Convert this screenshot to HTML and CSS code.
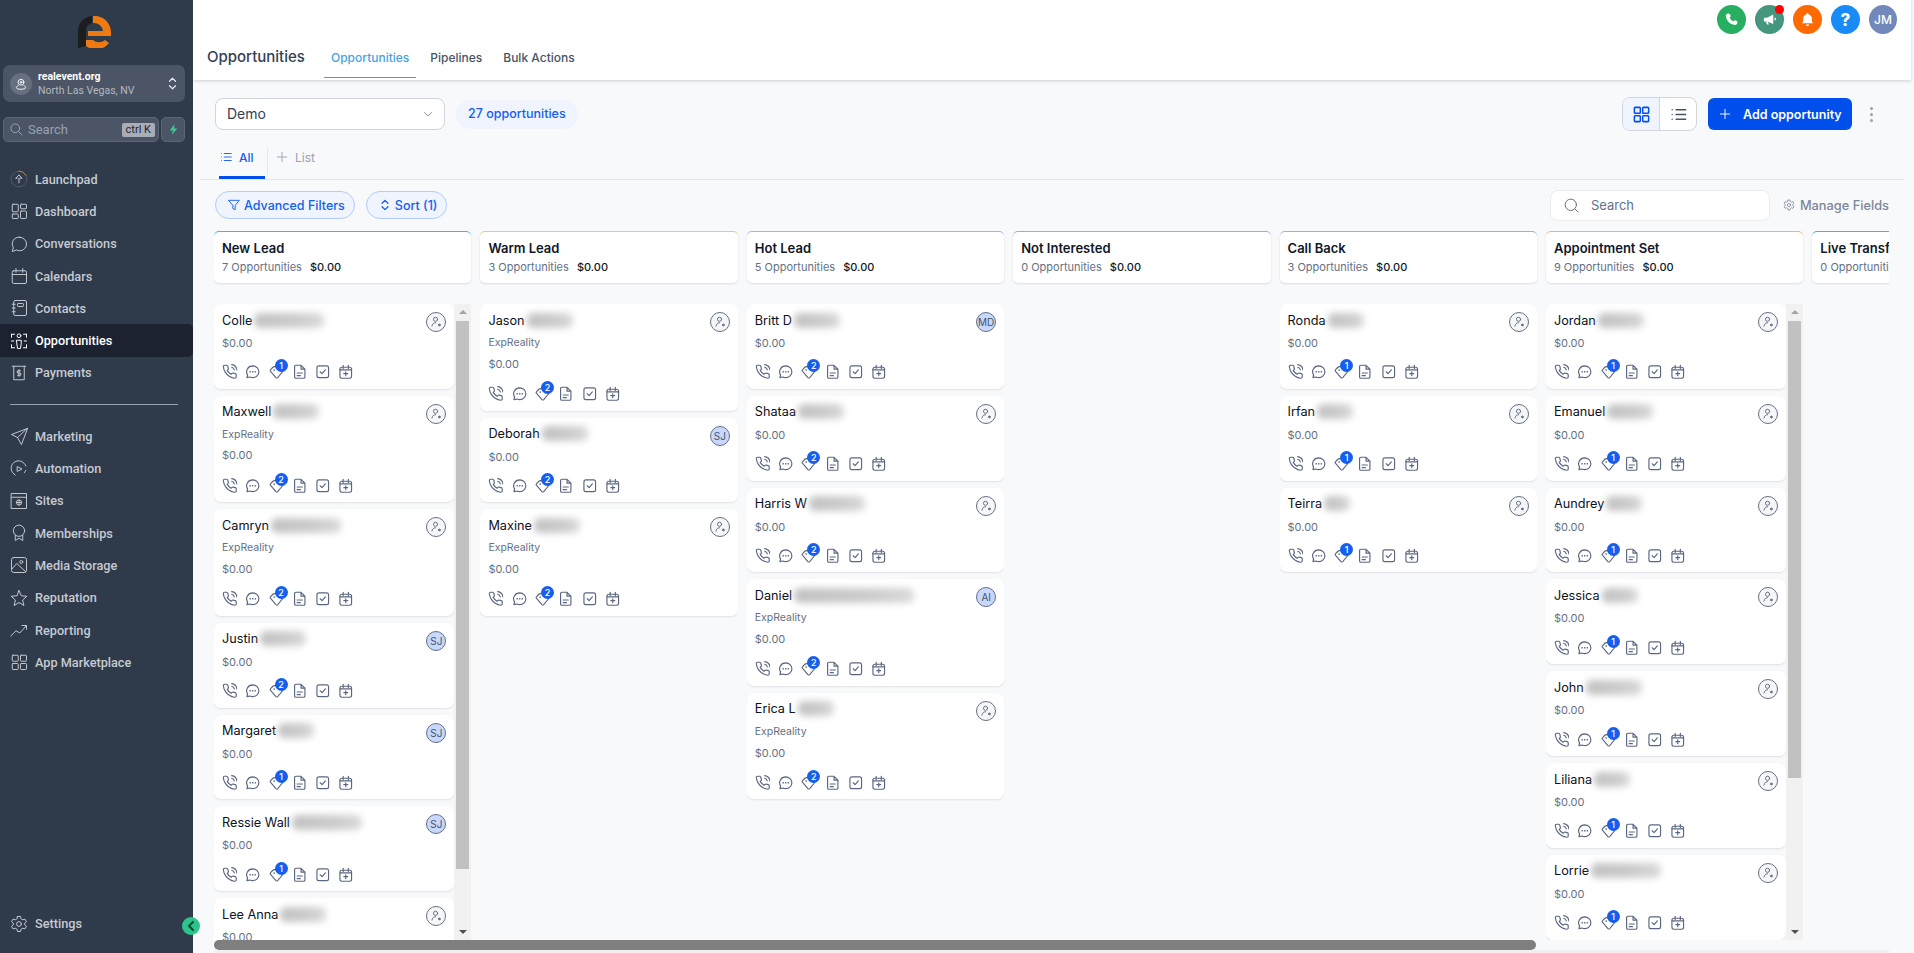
FILE: index.html
```html
<!DOCTYPE html>
<html lang="en">
  <head>
    <meta charset="UTF-8" />
    <title>Opportunities</title>
    <link rel="stylesheet" href="styles.css">
  </head>
  <body>
    <!-- shared icons -->
    <svg class="sprite" xmlns="http://www.w3.org/2000/svg">
      <symbol id="i-phone" viewBox="0 0 24 24"><path d="M15 5a5 5 0 0 1 4 4M15 1a9 9 0 0 1 8 8m-1 8v3a2 2 0 0 1-2.2 2 19.8 19.8 0 0 1-8.6-3.1 19.5 19.5 0 0 1-6-6A19.8 19.8 0 0 1 2.1 4.2 2 2 0 0 1 4.1 2h3a2 2 0 0 1 2 1.7c.1 1 .4 1.9.7 2.8a2 2 0 0 1-.5 2.1L8.1 9.9a16 16 0 0 0 6 6l1.3-1.3a2 2 0 0 1 2.1-.4c.9.3 1.8.6 2.8.7A2 2 0 0 1 22 17z"/></symbol>
      <symbol id="i-chat" viewBox="0 0 24 24"><path d="M12 3a9.500 9 0 0 1 0 18c-1.500 0-2.800-.3-4-.9L3 21l1-4.200A9.500 9 0 0 1 12 3z"/><path d="M8 12h.01M12 12h.01M16 12h.01" stroke-width="2.600"/></symbol>
      <symbol id="i-tag" viewBox="0 0 24 24"><path d="M2.500 11.500a2 2 0 0 1 0-2.800L6 5a4 4 0 0 1 3-1h10a2 2 0 0 1 2 2v6l-7.500 9a2 2 0 0 1-2.800 0z"/><path d="M8 9.500h.01" stroke-width="2.400"/></symbol>
      <symbol id="i-doc" viewBox="0 0 24 24"><path d="M14 2H6a2 2 0 0 0-2 2v16a2 2 0 0 0 2 2h12a2 2 0 0 0 2-2V8zM14 2v6h6M8 14h8M8 18h5"/></symbol>
      <symbol id="i-check" viewBox="0 0 24 24"><rect x="3" y="3" width="18" height="18" rx="3"/><path d="M8 12l3 3 5-6"/></symbol>
      <symbol id="i-cal" viewBox="0 0 24 24"><rect x="3" y="5" width="18" height="17" rx="3"/><path d="M8 2v5M16 2v5M3 9h18M12 12v6M9 15h6"/></symbol>
      <symbol id="i-assign" viewBox="0 0 20 20"><circle cx="9.500" cy="7" r="2.300"/><path d="M5.500 14.500c.3-2.400 2-3.700 4-3.700"/><circle cx="13.700" cy="13.300" r="1" fill="currentColor"/></symbol>
      <symbol id="i-list" viewBox="0 0 24 24"><path d="M9 6h12M9 12h12M9 18h12M4 6h.01M4 12h.01M4 18h.01"/></symbol>
      <symbol id="i-grid" viewBox="0 0 24 24"><rect x="3" y="3" width="7.500" height="7.500" rx="1"/><rect x="13.500" y="3" width="7.500" height="7.500" rx="1"/><rect x="3" y="13.500" width="7.500" height="7.500" rx="1"/><rect x="13.500" y="13.500" width="7.500" height="7.500" rx="1"/></symbol>
    </svg>

    <aside class="sidebar">
      <svg class="logo" viewBox="0 0 33 32">
        <path fill="#1d1d1f" d="M0 32V15A15 15 0 0 1 14 0v7a8 8 0 0 0-6 8v15z"/>
        <path fill="#ee7a12" d="M15 0a16.500 16.500 0 0 1 18 16v4H10v-5h15a9 9 0 0 0-10-8zM8 24h7a9 9 0 0 0 12 0l4 3a16 16 0 0 1-23 3z"/>
      </svg>

      <div class="location">
        <span class="location-icon">
          <svg viewBox="0 0 24 24"><circle cx="12" cy="9" r="5"/><circle cx="12" cy="9" r="1.500"/><path d="M7 15c-2 1-3 2-3 3 0 2 4 3 8 3s8-1 8-3c0-1-1-2-3-3"/></svg>
        </span>
        <div class="location-text">
          <div class="location-name">realevent.org</div>
          <div class="location-city">North Las Vegas, NV</div>
        </div>
        <svg class="location-arrows" viewBox="0 0 12 20"><path d="M2 7l4-4 4 4M2 13l4 4 4-4"/></svg>
      </div>

      <div class="search-row">
        <div class="side-search">
          <svg viewBox="0 0 24 24"><circle cx="10" cy="10" r="7"/><path d="M15.500 15.500L21 21"/></svg>
          <span class="side-search-text">Search</span>
          <span class="kbd">ctrl K</span>
        </div>
        <div class="bolt-box">
          <svg viewBox="0 0 24 24"><path d="M14 2L5 14h6l-2 8 10-12h-6z"/></svg>
        </div>
      </div>

      <nav class="nav nav-first">
        <a class="nav-item"><svg viewBox="0 0 24 24"><circle class="ring" cx="12" cy="12" r="10.500"/><path class="ring-on" d="M12 1.500A10.500 10.500 0 0 1 21 7"/><path d="M12 17v-6M8 11l4-4.500 4 4.500h-2.500M9.500 11H8"/></svg>Launchpad</a>
        <a class="nav-item"><svg viewBox="0 0 24 24"><rect x="3" y="3" width="8" height="10" rx="1"/><rect x="14" y="3" width="8" height="6" rx="1"/><rect x="3" y="16" width="8" height="6" rx="1"/><rect x="14" y="12" width="8" height="10" rx="1"/></svg>Dashboard</a>
        <a class="nav-item"><svg viewBox="0 0 24 24"><path d="M13 3a9 9 0 0 1 0 18c-1.500 0-3-.4-4.200-1L3 22l1.500-5A9 9 0 0 1 13 3z"/></svg>Conversations</a>
        <a class="nav-item"><svg viewBox="0 0 24 24"><rect x="3" y="5" width="19" height="17" rx="2"/><path d="M8 2v5M17 2v5M3 10h19"/></svg>Calendars</a>
        <a class="nav-item"><svg viewBox="0 0 24 24"><rect x="5" y="2" width="17" height="20" rx="2"/><path d="M3 7h4M3 12h4M3 17h4"/><rect x="10" y="6" width="8" height="4" rx="1"/></svg>Contacts</a>
        <a class="nav-item active"><svg viewBox="0 0 24 24" stroke-width="2"><circle cx="12" cy="5" r="2.500"/><path d="M9 11h6v4l-1 7h-4l-1-7zM2 3h4M2 3v4M22 3h-4M22 3v4M2 21v-4M2 21h4M22 21v-4M22 21h-4M2 12h3M19 12h3"/></svg>Opportunities</a>
        <a class="nav-item"><svg viewBox="0 0 24 24"><path d="M3 3h18M5 3v18h14V3"/><path d="M14 9h-3a1.500 1.500 0 0 0 0 3h2a1.500 1.500 0 0 1 0 3h-3M12 7.500v9" stroke-width="1.400"/></svg>Payments</a>
      </nav>

      <div class="nav-divider"></div>

      <nav class="nav">
        <a class="nav-item"><svg viewBox="0 0 24 24"><path d="M23 2L2 10l8 4 5 9zM10 14L23 2"/></svg>Marketing</a>
        <a class="nav-item"><svg viewBox="0 0 24 24"><path d="M7 20A10 10 0 1 1 21 8"/><path d="M10 9l6 3-6 3z"/><path d="M21 14a10 10 0 0 1-2 3"/></svg>Automation</a>
        <a class="nav-item"><svg viewBox="0 0 24 24"><rect x="2" y="2" width="20" height="20"/><path d="M2 7h20"/><circle cx="12" cy="14" r="3.500"/><path d="M8.500 14h7M12 10.500v7"/></svg>Sites</a>
        <a class="nav-item"><svg viewBox="0 0 24 24"><circle cx="12" cy="9" r="7.500"/><path d="M7 15v7l5-3 5 3v-7"/></svg>Memberships</a>
        <a class="nav-item"><svg viewBox="0 0 24 24"><rect x="2" y="2" width="20" height="20" rx="3"/><circle cx="15" cy="8" r="2"/><path d="M2 18l7-8 12 11"/></svg>Media Storage</a>
        <a class="nav-item"><svg viewBox="0 0 24 24"><path d="M12 2l3 7 7.500.7-5.700 5 1.700 7.300-6.500-4-6.500 4 1.700-7.300-5.700-5L9 9z"/></svg>Reputation</a>
        <a class="nav-item"><svg viewBox="0 0 24 24"><path d="M1 20l7-7 5 3 9-10M16 6h6v5"/></svg>Reporting</a>
        <a class="nav-item"><svg viewBox="0 0 24 24"><rect x="3" y="3" width="8" height="8" rx="1"/><rect x="14" y="3" width="8" height="8" rx="1"/><rect x="3" y="14" width="8" height="8" rx="1"/><rect x="14" y="14" width="8" height="8" rx="1"/></svg>App Marketplace</a>
      </nav>

      <a class="nav-item settings"><svg viewBox="0 0 24 24"><circle cx="12" cy="12" r="3.200"/><path d="M10 2h4l.6 3 2.400 1.400 2.900-1 2 3.400-2.300 2v2.400l2.300 2-2 3.400-2.900-1L14.600 19l-.6 3h-4l-.6-3L7 17.600l-2.900 1-2-3.400 2.300-2v-2.400l-2.300-2 2-3.400 2.900 1L9.400 5z"/></svg>Settings</a>

      <span class="collapse-btn">
        <svg viewBox="0 0 12 12"><path d="M8 2L4 6l4 4"/></svg>
      </span>
    </aside>

    <main class="main">
      <header class="topbar">
        <div class="topbar-actions">
          <span class="round round-phone"><svg viewBox="0 0 24 24"><path d="M6.600 2.500l3 .5 1.300 4.200-2 1.800a13 13 0 0 0 6 6l1.800-2 4.200 1.300.5 3c0 2-2 3.700-4 3.500C9.500 20 3.800 14 2.900 6.500 2.800 4.500 4.500 2.500 6.600 2.500z"/></svg></span>
          <span class="round round-news">
            <svg viewBox="0 0 24 24"><path d="M3 9h5l10-5v15L8 15H3z"/><path d="M6 15l2 5h3l-2-5z"/><path d="M20 9h2v4h-2z"/></svg>
            <i class="dot-red"></i>
          </span>
          <span class="round round-bell"><svg viewBox="0 0 24 24"><path d="M12 2a2 2 0 0 1 2 2 7 7 0 0 1 5 7v4l2 3H3l2-3v-4a7 7 0 0 1 5-7 2 2 0 0 1 2-2zM9.500 20h5a2.500 2.500 0 0 1-5 0z"/></svg></span>
          <span class="round round-help">?</span>
          <span class="round round-user">JM</span>
        </div>
        <div class="topbar-nav">
          <h1 class="page-title">Opportunities</h1>
          <a class="top-tab active">Opportunities</a>
          <a class="top-tab">Pipelines</a>
          <a class="top-tab">Bulk Actions</a>
        </div>
      </header>

      <section class="content">
        <div class="toolbar">
          <div class="select">Demo
            <svg viewBox="0 0 24 24"><path d="M5 9l7 7 7-7"/></svg>
          </div>
          <span class="count-chip">27 opportunities</span>
          <div class="toolbar-right">
            <div class="view-toggle">
              <span class="view-btn on"><svg><use href="#i-grid"/></svg></span>
              <span class="view-btn"><svg><use href="#i-list"/></svg></span>
            </div>
            <button class="add-btn"><svg viewBox="0 0 24 24"><path d="M12 4v16M4 12h16"/></svg>Add opportunity</button>
            <span class="kebab"><i></i><i></i><i></i></span>
          </div>
        </div>

        <div class="list-tabs">
          <a class="list-tab on"><svg><use href="#i-list"/></svg>All</a>
          <span class="list-sep"></span>
          <a class="list-tab"><svg viewBox="0 0 24 24"><path d="M12 4v16M4 12h16"/></svg>List</a>
        </div>

        <div class="filters">
          <button class="pill"><svg viewBox="0 0 24 24"><path d="M3 4h18l-7 9v7l-4-2v-5z"/></svg>Advanced Filters</button>
          <button class="pill pill-sort"><svg viewBox="0 0 24 24"><path d="M7 9l5-5 5 5M7 15l5 5 5-5"/></svg>Sort (1)</button>
          <div class="filters-right">
            <div class="board-search">
              <svg viewBox="0 0 24 24"><circle cx="11" cy="11" r="8"/><path d="M17 17l4 4"/></svg>
              Search
            </div>
            <a class="manage"><svg viewBox="0 0 24 24"><circle cx="12" cy="12" r="3.200"/><path d="M10 2h4l.6 3 2.400 1.400 2.900-1 2 3.400-2.300 2v2.400l2.300 2-2 3.400-2.900-1L14.600 19l-.6 3h-4l-.6-3L7 17.600l-2.900 1-2-3.400 2.300-2v-2.400l-2.300-2 2-3.400 2.900 1L9.400 5z"/></svg>Manage Fields</a>
          </div>
        </div>

        <div class="board">
          <div class="columns">

            <div class="column">
              <div class="stage stage-sky"><div class="stage-name">New Lead</div><div class="stage-meta">7 Opportunities <b>$0.00</b></div></div>
              <div class="stage-body">
                <div class="cards">
                  <div class="card"><div class="card-head"><span class="name">Colle</span><span class="blur blur-xl"></span><span class="assign"><svg><use href="#i-assign"/></svg></span></div><div class="price">$0.00</div><div class="acts"><svg><use href="#i-phone"/></svg><svg><use href="#i-chat"/></svg><span class="tag"><svg><use href="#i-tag"/></svg><em>1</em></span><svg><use href="#i-doc"/></svg><svg><use href="#i-check"/></svg><svg><use href="#i-cal"/></svg></div></div>
                  <div class="card"><div class="card-head"><span class="name">Maxwell</span><span class="blur blur-m"></span><span class="assign"><svg><use href="#i-assign"/></svg></span></div><div class="company">ExpReality</div><div class="price">$0.00</div><div class="acts"><svg><use href="#i-phone"/></svg><svg><use href="#i-chat"/></svg><span class="tag"><svg><use href="#i-tag"/></svg><em>2</em></span><svg><use href="#i-doc"/></svg><svg><use href="#i-check"/></svg><svg><use href="#i-cal"/></svg></div></div>
                  <div class="card"><div class="card-head"><span class="name">Camryn</span><span class="blur blur-xl"></span><span class="assign"><svg><use href="#i-assign"/></svg></span></div><div class="company">ExpReality</div><div class="price">$0.00</div><div class="acts"><svg><use href="#i-phone"/></svg><svg><use href="#i-chat"/></svg><span class="tag"><svg><use href="#i-tag"/></svg><em>2</em></span><svg><use href="#i-doc"/></svg><svg><use href="#i-check"/></svg><svg><use href="#i-cal"/></svg></div></div>
                  <div class="card"><div class="card-head"><span class="name">Justin</span><span class="blur blur-m"></span><span class="assign initials">SJ</span></div><div class="price">$0.00</div><div class="acts"><svg><use href="#i-phone"/></svg><svg><use href="#i-chat"/></svg><span class="tag"><svg><use href="#i-tag"/></svg><em>2</em></span><svg><use href="#i-doc"/></svg><svg><use href="#i-check"/></svg><svg><use href="#i-cal"/></svg></div></div>
                  <div class="card"><div class="card-head"><span class="name">Margaret</span><span class="blur blur-s"></span><span class="assign initials">SJ</span></div><div class="price">$0.00</div><div class="acts"><svg><use href="#i-phone"/></svg><svg><use href="#i-chat"/></svg><span class="tag"><svg><use href="#i-tag"/></svg><em>1</em></span><svg><use href="#i-doc"/></svg><svg><use href="#i-check"/></svg><svg><use href="#i-cal"/></svg></div></div>
                  <div class="card"><div class="card-head"><span class="name">Ressie Wall</span><span class="blur blur-xl"></span><span class="assign initials">SJ</span></div><div class="price">$0.00</div><div class="acts"><svg><use href="#i-phone"/></svg><svg><use href="#i-chat"/></svg><span class="tag"><svg><use href="#i-tag"/></svg><em>1</em></span><svg><use href="#i-doc"/></svg><svg><use href="#i-check"/></svg><svg><use href="#i-cal"/></svg></div></div>
                  <div class="card"><div class="card-head"><span class="name">Lee Anna</span><span class="blur blur-m"></span><span class="assign"><svg><use href="#i-assign"/></svg></span></div><div class="price">$0.00</div></div>
                </div>
                <div class="vbar"><i class="up"></i><b class="thumb thumb-long"></b><i class="down"></i></div>
              </div>
            </div>

            <div class="column">
              <div class="stage stage-amber"><div class="stage-name">Warm Lead</div><div class="stage-meta">3 Opportunities <b>$0.00</b></div></div>
              <div class="stage-body">
                <div class="cards">
                  <div class="card"><div class="card-head"><span class="name">Jason</span><span class="blur blur-m"></span><span class="assign"><svg><use href="#i-assign"/></svg></span></div><div class="company">ExpReality</div><div class="price">$0.00</div><div class="acts"><svg><use href="#i-phone"/></svg><svg><use href="#i-chat"/></svg><span class="tag"><svg><use href="#i-tag"/></svg><em>2</em></span><svg><use href="#i-doc"/></svg><svg><use href="#i-check"/></svg><svg><use href="#i-cal"/></svg></div></div>
                  <div class="card"><div class="card-head"><span class="name">Deborah</span><span class="blur blur-m"></span><span class="assign initials">SJ</span></div><div class="price">$0.00</div><div class="acts"><svg><use href="#i-phone"/></svg><svg><use href="#i-chat"/></svg><span class="tag"><svg><use href="#i-tag"/></svg><em>2</em></span><svg><use href="#i-doc"/></svg><svg><use href="#i-check"/></svg><svg><use href="#i-cal"/></svg></div></div>
                  <div class="card"><div class="card-head"><span class="name">Maxine</span><span class="blur blur-m"></span><span class="assign"><svg><use href="#i-assign"/></svg></span></div><div class="company">ExpReality</div><div class="price">$0.00</div><div class="acts"><svg><use href="#i-phone"/></svg><svg><use href="#i-chat"/></svg><span class="tag"><svg><use href="#i-tag"/></svg><em>2</em></span><svg><use href="#i-doc"/></svg><svg><use href="#i-check"/></svg><svg><use href="#i-cal"/></svg></div></div>
                </div>
              </div>
            </div>

            <div class="column">
              <div class="stage stage-violet"><div class="stage-name">Hot Lead</div><div class="stage-meta">5 Opportunities <b>$0.00</b></div></div>
              <div class="stage-body">
                <div class="cards">
                  <div class="card"><div class="card-head"><span class="name">Britt D</span><span class="blur blur-m"></span><span class="assign initials">MD</span></div><div class="price">$0.00</div><div class="acts"><svg><use href="#i-phone"/></svg><svg><use href="#i-chat"/></svg><span class="tag"><svg><use href="#i-tag"/></svg><em>2</em></span><svg><use href="#i-doc"/></svg><svg><use href="#i-check"/></svg><svg><use href="#i-cal"/></svg></div></div>
                  <div class="card"><div class="card-head"><span class="name">Shataa</span><span class="blur blur-m"></span><span class="assign"><svg><use href="#i-assign"/></svg></span></div><div class="price">$0.00</div><div class="acts"><svg><use href="#i-phone"/></svg><svg><use href="#i-chat"/></svg><span class="tag"><svg><use href="#i-tag"/></svg><em>2</em></span><svg><use href="#i-doc"/></svg><svg><use href="#i-check"/></svg><svg><use href="#i-cal"/></svg></div></div>
                  <div class="card"><div class="card-head"><span class="name">Harris W</span><span class="blur blur-l"></span><span class="assign"><svg><use href="#i-assign"/></svg></span></div><div class="price">$0.00</div><div class="acts"><svg><use href="#i-phone"/></svg><svg><use href="#i-chat"/></svg><span class="tag"><svg><use href="#i-tag"/></svg><em>2</em></span><svg><use href="#i-doc"/></svg><svg><use href="#i-check"/></svg><svg><use href="#i-cal"/></svg></div></div>
                  <div class="card"><div class="card-head"><span class="name">Daniel</span><span class="blur blur-xxl"></span><span class="assign initials">AI</span></div><div class="company">ExpReality</div><div class="price">$0.00</div><div class="acts"><svg><use href="#i-phone"/></svg><svg><use href="#i-chat"/></svg><span class="tag"><svg><use href="#i-tag"/></svg><em>2</em></span><svg><use href="#i-doc"/></svg><svg><use href="#i-check"/></svg><svg><use href="#i-cal"/></svg></div></div>
                  <div class="card"><div class="card-head"><span class="name">Erica L</span><span class="blur blur-s"></span><span class="assign"><svg><use href="#i-assign"/></svg></span></div><div class="company">ExpReality</div><div class="price">$0.00</div><div class="acts"><svg><use href="#i-phone"/></svg><svg><use href="#i-chat"/></svg><span class="tag"><svg><use href="#i-tag"/></svg><em>2</em></span><svg><use href="#i-doc"/></svg><svg><use href="#i-check"/></svg><svg><use href="#i-cal"/></svg></div></div>
                </div>
              </div>
            </div>

            <div class="column">
              <div class="stage stage-blue"><div class="stage-name">Not Interested</div><div class="stage-meta">0 Opportunities <b>$0.00</b></div></div>
              <div class="stage-body"></div>
            </div>

            <div class="column">
              <div class="stage stage-blue"><div class="stage-name">Call Back</div><div class="stage-meta">3 Opportunities <b>$0.00</b></div></div>
              <div class="stage-body">
                <div class="cards">
                  <div class="card"><div class="card-head"><span class="name">Ronda</span><span class="blur blur-s"></span><span class="assign"><svg><use href="#i-assign"/></svg></span></div><div class="price">$0.00</div><div class="acts"><svg><use href="#i-phone"/></svg><svg><use href="#i-chat"/></svg><span class="tag"><svg><use href="#i-tag"/></svg><em>1</em></span><svg><use href="#i-doc"/></svg><svg><use href="#i-check"/></svg><svg><use href="#i-cal"/></svg></div></div>
                  <div class="card"><div class="card-head"><span class="name">Irfan</span><span class="blur blur-s"></span><span class="assign"><svg><use href="#i-assign"/></svg></span></div><div class="price">$0.00</div><div class="acts"><svg><use href="#i-phone"/></svg><svg><use href="#i-chat"/></svg><span class="tag"><svg><use href="#i-tag"/></svg><em>1</em></span><svg><use href="#i-doc"/></svg><svg><use href="#i-check"/></svg><svg><use href="#i-cal"/></svg></div></div>
                  <div class="card"><div class="card-head"><span class="name">Teirra</span><span class="blur blur-xs"></span><span class="assign"><svg><use href="#i-assign"/></svg></span></div><div class="price">$0.00</div><div class="acts"><svg><use href="#i-phone"/></svg><svg><use href="#i-chat"/></svg><span class="tag"><svg><use href="#i-tag"/></svg><em>1</em></span><svg><use href="#i-doc"/></svg><svg><use href="#i-check"/></svg><svg><use href="#i-cal"/></svg></div></div>
                </div>
              </div>
            </div>

            <div class="column">
              <div class="stage stage-orange"><div class="stage-name">Appointment Set</div><div class="stage-meta">9 Opportunities <b>$0.00</b></div></div>
              <div class="stage-body">
                <div class="cards">
                  <div class="card"><div class="card-head"><span class="name">Jordan</span><span class="blur blur-m"></span><span class="assign"><svg><use href="#i-assign"/></svg></span></div><div class="price">$0.00</div><div class="acts"><svg><use href="#i-phone"/></svg><svg><use href="#i-chat"/></svg><span class="tag"><svg><use href="#i-tag"/></svg><em>1</em></span><svg><use href="#i-doc"/></svg><svg><use href="#i-check"/></svg><svg><use href="#i-cal"/></svg></div></div>
                  <div class="card"><div class="card-head"><span class="name">Emanuel</span><span class="blur blur-m"></span><span class="assign"><svg><use href="#i-assign"/></svg></span></div><div class="price">$0.00</div><div class="acts"><svg><use href="#i-phone"/></svg><svg><use href="#i-chat"/></svg><span class="tag"><svg><use href="#i-tag"/></svg><em>1</em></span><svg><use href="#i-doc"/></svg><svg><use href="#i-check"/></svg><svg><use href="#i-cal"/></svg></div></div>
                  <div class="card"><div class="card-head"><span class="name">Aundrey</span><span class="blur blur-s"></span><span class="assign"><svg><use href="#i-assign"/></svg></span></div><div class="price">$0.00</div><div class="acts"><svg><use href="#i-phone"/></svg><svg><use href="#i-chat"/></svg><span class="tag"><svg><use href="#i-tag"/></svg><em>1</em></span><svg><use href="#i-doc"/></svg><svg><use href="#i-check"/></svg><svg><use href="#i-cal"/></svg></div></div>
                  <div class="card"><div class="card-head"><span class="name">Jessica</span><span class="blur blur-s"></span><span class="assign"><svg><use href="#i-assign"/></svg></span></div><div class="price">$0.00</div><div class="acts"><svg><use href="#i-phone"/></svg><svg><use href="#i-chat"/></svg><span class="tag"><svg><use href="#i-tag"/></svg><em>1</em></span><svg><use href="#i-doc"/></svg><svg><use href="#i-check"/></svg><svg><use href="#i-cal"/></svg></div></div>
                  <div class="card"><div class="card-head"><span class="name">John</span><span class="blur blur-l"></span><span class="assign"><svg><use href="#i-assign"/></svg></span></div><div class="price">$0.00</div><div class="acts"><svg><use href="#i-phone"/></svg><svg><use href="#i-chat"/></svg><span class="tag"><svg><use href="#i-tag"/></svg><em>1</em></span><svg><use href="#i-doc"/></svg><svg><use href="#i-check"/></svg><svg><use href="#i-cal"/></svg></div></div>
                  <div class="card"><div class="card-head"><span class="name">Liliana</span><span class="blur blur-s"></span><span class="assign"><svg><use href="#i-assign"/></svg></span></div><div class="price">$0.00</div><div class="acts"><svg><use href="#i-phone"/></svg><svg><use href="#i-chat"/></svg><span class="tag"><svg><use href="#i-tag"/></svg><em>1</em></span><svg><use href="#i-doc"/></svg><svg><use href="#i-check"/></svg><svg><use href="#i-cal"/></svg></div></div>
                  <div class="card"><div class="card-head"><span class="name">Lorrie</span><span class="blur blur-xl"></span><span class="assign"><svg><use href="#i-assign"/></svg></span></div><div class="price">$0.00</div><div class="acts"><svg><use href="#i-phone"/></svg><svg><use href="#i-chat"/></svg><span class="tag"><svg><use href="#i-tag"/></svg><em>1</em></span><svg><use href="#i-doc"/></svg><svg><use href="#i-check"/></svg><svg><use href="#i-cal"/></svg></div></div>
                </div>
                <div class="vbar"><i class="up"></i><b class="thumb thumb-short"></b><i class="down"></i></div>
              </div>
            </div>

            <div class="column">
              <div class="stage stage-sky"><div class="stage-name">Live Transfer</div><div class="stage-meta">0 Opportunities <b>$0.00</b></div></div>
              <div class="stage-body"></div>
            </div>

          </div>
          <div class="hbar"><b class="hthumb"></b></div>
        </div>
      </section>
    </main>
  </body>
</html>
```

FILE: styles.css
```css
* {
  box-sizing: border-box;
}
html,
body {
  margin: 0;
  height: 100%;
  overflow: hidden;
}
body {
  display: flex;
  background-color: #f8f9fb;
  font-family: Inter, "Liberation Sans", sans-serif;
  color: #101828;
}
svg {
  display: block;
  fill: none;
  stroke: currentColor;
  stroke-width: 1.6;
  stroke-linecap: round;
  stroke-linejoin: round;
}
.sprite {
  display: none;
}
h1 {
  margin: 0;
}
button {
  font-family: inherit;
  cursor: pointer;
}

/* sidebar */
.sidebar {
  position: relative;
  flex: none;
  width: 193px;
  display: flex;
  flex-direction: column;
  padding-top: 16px;
  background-color: #2f3a4b;
  font-family: Roboto, "Liberation Sans", sans-serif;
}
.logo {
  width: 33px;
  height: 32px;
  margin-left: 78px;
  stroke: none;
}
.location {
  display: flex;
  align-items: center;
  height: 37px;
  margin: 17px 8px 0 3px;
  padding: 0 8px 0 7px;
  border-radius: 7px;
  background-color: #4b5565;
}
.location-icon {
  flex: none;
  width: 22px;
  height: 22px;
  display: flex;
  align-items: center;
  justify-content: center;
  margin-right: 6px;
  border-radius: 50%;
  background-color: #667080;
  color: #fff;
}
.location-icon svg {
  width: 14px;
  height: 14px;
}
.location-text {
  flex: 1;
  font-size: 10.500px;
  line-height: 14px;
}
.location-name {
  color: #fff;
  font-weight: 700;
}
.location-city {
  color: #b4b9c2;
  white-space: nowrap;
}
.location-arrows {
  flex: none;
  width: 9px;
  height: 15px;
  color: #e4e7ec;
}
.search-row {
  display: flex;
  gap: 2px;
  height: 25px;
  margin: 15px 8px 0 3px;
}
.side-search {
  flex: 1;
  display: flex;
  align-items: center;
  padding: 0 3px 0 5px;
  border: 1px solid #5c6675;
  border-radius: 5px;
  background-color: #4b5565;
  color: #98a2b3;
}
.side-search svg {
  width: 15px;
  height: 15px;
  margin-right: 4px;
}
.side-search-text {
  flex: 1;
  font-size: 13px;
}
.kbd {
  height: 14px;
  padding: 0 4px;
  border-radius: 2px;
  background-color: #a9adb5;
  color: #1d2939;
  font-size: 11px;
  line-height: 14px;
}
.bolt-box {
  flex: none;
  width: 24px;
  display: flex;
  align-items: center;
  justify-content: center;
  border: 1px solid #5c6675;
  border-radius: 5px;
  background-color: #4b5565;
}
.bolt-box svg {
  width: 13px;
  height: 13px;
  fill: #37ca93;
  stroke: none;
}
.nav-first {
  margin-top: 21px;
}
.nav-item {
  display: flex;
  align-items: center;
  gap: 7px;
  height: 32.300px;
  padding-left: 10px;
  color: #c6cad1;
  font-size: 12.700px;
  font-weight: 500;
  white-space: nowrap;
}
.nav-item svg {
  flex: none;
  width: 18px;
  height: 18px;
  stroke-width: 1.300;
}
.nav-item.active {
  border-radius: 0 5px 5px 0;
  background-color: #1c2230;
  color: #fff;
}
.ring {
  stroke: #4f5a6b;
}
.ring-on {
  stroke: #e0752a;
}
.nav-divider {
  height: 1px;
  margin: 15px 15px 15px 10px;
  background-color: #98a2b3;
}
.settings {
  margin-top: auto;
  margin-bottom: 13px;
}
.collapse-btn {
  position: absolute;
  right: -7px;
  top: 917px;
  width: 18px;
  height: 18px;
  display: flex;
  align-items: center;
  justify-content: center;
  border-radius: 50%;
  background-color: #2bc48a;
  color: #134a36;
}
.collapse-btn svg {
  width: 12px;
  height: 12px;
  stroke-width: 2.200;
}

/* main */
.main {
  flex: 1;
  min-width: 0;
  display: flex;
  flex-direction: column;
}
.topbar {
  flex: none;
  height: 80px;
  margin-right: 3px;
  background-color: #fff;
  box-shadow: 0 1px 3px rgba(16, 24, 40, 0.18);
}
.topbar-actions {
  display: flex;
  justify-content: flex-end;
  gap: 9px;
  height: 39px;
  padding: 5px 14px 0 0;
}
.round {
  position: relative;
  width: 29px;
  height: 29px;
  display: flex;
  align-items: center;
  justify-content: center;
  border-radius: 50%;
  color: #fff;
}
.round svg {
  width: 15px;
  height: 15px;
  fill: #fff;
  stroke: none;
}
.round-phone {
  background-color: #27ae60;
}
.round-news {
  background-color: #45967f;
}
.round-bell {
  background-color: #ff6a00;
}
.round-help {
  background-color: #188bf6;
  font-size: 17px;
  font-weight: 800;
}
.round-user {
  width: 28px;
  background-color: #7288bb;
  font-size: 12px;
  font-weight: 500;
}
.dot-red {
  position: absolute;
  top: 0;
  right: 0;
  width: 9px;
  height: 9px;
  border-radius: 50%;
  background-color: #f00;
}
.topbar-nav {
  display: flex;
  align-items: stretch;
  height: 39px;
  padding-left: 14px;
}
.page-title {
  width: 103px;
  margin-top: 8px;
  color: #344054;
  font-size: 15px;
  font-weight: 500;
  line-height: 19px;
  white-space: nowrap;
}
.top-tab {
  height: 39px;
  margin-left: 14px;
  padding: 10px 7px 0;
  color: #475467;
  font-size: 12px;
  font-weight: 500;
  line-height: 18px;
}
.top-tab + .top-tab {
  margin-left: 7px;
}
.top-tab.active {
  border-bottom: 1px solid #4a9fd8;
  color: #46a3e0;
}

.content {
  flex: 1;
  min-height: 0;
  display: flex;
  flex-direction: column;
  padding: 0 10px 0 7px;
}
.toolbar {
  flex: none;
  display: flex;
  align-items: center;
  height: 34px;
  margin-top: 17px;
  padding: 0 15px;
}
.select {
  position: relative;
  width: 230px;
  height: 32px;
  padding-left: 11px;
  border: 1px solid #d0d5dd;
  border-radius: 8px;
  background-color: #fff;
  color: #344054;
  font-size: 14px;
  line-height: 30px;
}
.select svg {
  position: absolute;
  right: 10px;
  top: 9px;
  width: 12px;
  height: 12px;
  color: #667085;
}
.count-chip {
  height: 29px;
  margin-left: 11px;
  padding: 0 12px;
  border-radius: 15px;
  background-color: #eff4ff;
  color: #155eef;
  font-size: 12.500px;
  font-weight: 500;
  line-height: 28px;
}
.toolbar-right {
  display: flex;
  align-items: center;
  margin-left: auto;
}
.view-toggle {
  display: flex;
  width: 75px;
  height: 34px;
  border: 1px solid #d0d5dd;
  border-radius: 8px;
  background-color: #fff;
  overflow: hidden;
}
.view-btn {
  flex: 1;
  display: flex;
  align-items: center;
  justify-content: center;
  color: #475467;
}
.view-btn svg {
  width: 19px;
  height: 19px;
  stroke-width: 1.900;
}
.view-btn.on {
  border-right: 1px solid #d0d5dd;
  background-color: #eff4ff;
  color: #004eeb;
}
.add-btn {
  display: flex;
  align-items: center;
  gap: 11px;
  width: 144px;
  height: 32px;
  margin-left: 11px;
  padding: 0 0 0 10px;
  border: 0;
  border-radius: 6px;
  background-color: #004eeb;
  color: #fff;
  font-size: 12.500px;
  font-weight: 600;
  white-space: nowrap;
}
.add-btn svg {
  width: 14px;
  height: 14px;
}
.kebab {
  display: flex;
  flex-direction: column;
  gap: 3px;
  margin: 0 16px 0 18px;
}
.kebab i {
  width: 3px;
  height: 3px;
  border-radius: 50%;
  background-color: #98a2b3;
}
.list-tabs {
  flex: none;
  display: flex;
  align-items: flex-start;
  height: 49px;
  padding: 0 0 0 19px;
  border-bottom: 1px solid #e4e7ec;
}
.list-tab {
  display: flex;
  align-items: center;
  gap: 6px;
  height: 28px;
  margin-top: 12px;
  color: #98a2b3;
  font-size: 12px;
  font-weight: 400;
}
.list-tab svg {
  width: 14px;
  height: 14px;
}
.list-tab.on {
  width: 46px;
  height: 48px;
  margin-top: 0;
  padding: 7px 0 0;
  border-bottom: 3px solid #004eeb;
  color: #155eef;
  font-weight: 500;
}
.list-sep {
  width: 1px;
  height: 27px;
  margin: 17px 7px 0 2px;
  background-color: #e4e7ec;
}
.filters {
  flex: none;
  display: flex;
  align-items: center;
  gap: 11px;
  height: 30px;
  margin-top: 10px;
  padding: 0 15px;
}
.pill {
  display: flex;
  align-items: center;
  gap: 3px;
  height: 28px;
  padding: 0 9px 0 11px;
  border: 1px solid #b2ccff;
  border-radius: 14px;
  background-color: #eff4ff;
  color: #155eef;
  font-size: 12.500px;
  font-weight: 500;
  white-space: nowrap;
}
.pill svg {
  width: 14px;
  height: 14px;
}
.pill-sort svg {
  stroke-width: 2.200;
}
.filters-right {
  display: flex;
  align-items: center;
  gap: 13px;
  margin-left: auto;
}
.board-search {
  display: flex;
  align-items: center;
  gap: 11px;
  width: 220px;
  height: 31px;
  padding-left: 12px;
  border: 1px solid #eaecf0;
  border-radius: 8px;
  background-color: #fff;
  color: #667085;
  font-size: 13px;
}
.board-search svg {
  width: 17px;
  height: 17px;
  stroke-width: 1.400;
}
.manage {
  display: flex;
  align-items: center;
  gap: 5px;
  color: #7d8797;
  font-size: 12.800px;
  font-weight: 500;
  white-space: nowrap;
}
.manage svg {
  width: 12px;
  height: 12px;
}

/* board */
.board {
  flex: 1;
  min-height: 0;
  display: flex;
  flex-direction: column;
  margin: 11px 15px 0 14px;
  overflow: hidden;
}
.columns {
  flex: none;
  display: flex;
  gap: 9px;
  height: 709px;
}
.column {
  flex: none;
  width: 257.400px;
  display: flex;
  flex-direction: column;
}
.stage {
  flex: none;
  height: 52px;
  padding: 7px 8px 0;
  border-top: 1.500px solid #94aff0;
  border-radius: 5px;
  background-color: #fff;
  box-shadow: 0 1px 2px rgba(16, 24, 40, 0.12);
  white-space: nowrap;
}
.stage-sky {
  border-top-color: #3cb1ff;
}
.stage-amber {
  border-top-color: #f4c56e;
}
.stage-violet {
  border-top-color: #a6aef0;
}
.stage-blue {
  border-top-color: #93aeea;
}
.stage-orange {
  border-top-color: #f6b074;
}
.stage-name {
  font-size: 13px;
  font-weight: 600;
  line-height: 18px;
}
.stage-meta {
  margin-top: 2px;
  color: #667085;
  font-size: 11px;
  line-height: 16px;
}
.stage-meta b {
  margin-left: 5px;
  color: #101828;
  font-weight: 500;
}
.stage-body {
  flex: none;
  display: flex;
  height: 636px;
  margin-top: 21px;
}
.cards {
  flex: 1;
  min-width: 0;
  display: flex;
  flex-direction: column;
  gap: 7px;
  overflow: hidden;
}
.card {
  flex: none;
  display: flex;
  flex-direction: column;
  min-height: 84.830px;
  padding: 8px 8px 9px;
  border-radius: 7px;
  background-color: #fff;
  box-shadow: 0 1px 2px rgba(16, 24, 40, 0.1);
}
.card:has(.company) {
  min-height: 106.500px;
}
.card-head {
  display: flex;
  align-items: center;
  height: 16px;
}
.name {
  color: #0c111d;
  font-size: 12.700px;
  white-space: nowrap;
}
/* names are blurred out in the source */
.blur {
  height: 15px;
  margin-left: 2px;
  border-radius: 6px;
  background: linear-gradient(to right, #c2c2c2, #cbcbcb 60%, #dadada);
  filter: blur(3.500px);
}
.blur-xs {
  width: 26px;
}
.blur-s {
  width: 36px;
}
.blur-m {
  width: 46px;
}
.blur-l {
  width: 56px;
}
.blur-xl {
  width: 70px;
}
.blur-xxl {
  width: 120px;
}
.assign {
  flex: none;
  width: 20px;
  height: 20px;
  display: flex;
  align-items: center;
  justify-content: center;
  margin: 4px 0 0 auto;
  border: 1px solid #667085;
  border-radius: 50%;
  background-color: #f5f6f8;
  color: #667085;
}
.assign svg {
  width: 18px;
  height: 18px;
  stroke-width: 1.100;
}
.initials {
  background-color: #c7d7fe;
  color: #475467;
  font-size: 10px;
}
.company {
  margin-top: 8px;
  color: #667085;
  font-size: 10.500px;
  line-height: 14.600px;
}
.price {
  margin-top: 7px;
  color: #667085;
  font-size: 11px;
  line-height: 16px;
}
.company + .price {
  margin-top: 5px;
}
.acts {
  display: flex;
  gap: 7.800px;
  height: 15.500px;
  margin-top: auto;
  color: #5b6780;
}
.acts svg {
  flex: none;
  width: 15.500px;
  height: 15.500px;
  stroke-width: 1.800;
}
.tag {
  position: relative;
  flex: none;
  width: 15.500px;
  height: 15.500px;
}
.tag em {
  position: absolute;
  left: 6px;
  top: -5px;
  width: 13px;
  height: 13px;
  border-radius: 50%;
  background-color: #155eef;
  color: #fff;
  font-size: 9px;
  font-style: normal;
  font-weight: 500;
  line-height: 13px;
  text-align: center;
}

/* scrollbars */
.vbar {
  flex: none;
  width: 17px;
  height: 636px;
  display: flex;
  flex-direction: column;
  align-items: center;
  background-color: #f1f1f1;
}
.vbar .up {
  width: 0;
  height: 0;
  margin: 6px 0 5px;
  border: 4px solid transparent;
  border-top: 0;
  border-bottom: 4px solid #a3a3a3;
}
.vbar .down {
  width: 0;
  height: 0;
  margin: auto 0 6px;
  border: 4px solid transparent;
  border-bottom: 0;
  border-top: 4px solid #505050;
}
.thumb {
  width: 13px;
  background-color: #c1c1c1;
}
.thumb-long {
  height: 548px;
  margin-top: 2px;
}
.thumb-short {
  height: 457px;
  margin-top: 2px;
}
.hbar {
  flex: none;
  height: 13px;
  background: linear-gradient(to bottom, transparent 10px, #f0f1f3 10px);
}
.hthumb {
  display: block;
  width: 1322px;
  height: 10px;
  border-radius: 5px;
  background-color: #7f7f7f;
}
```
